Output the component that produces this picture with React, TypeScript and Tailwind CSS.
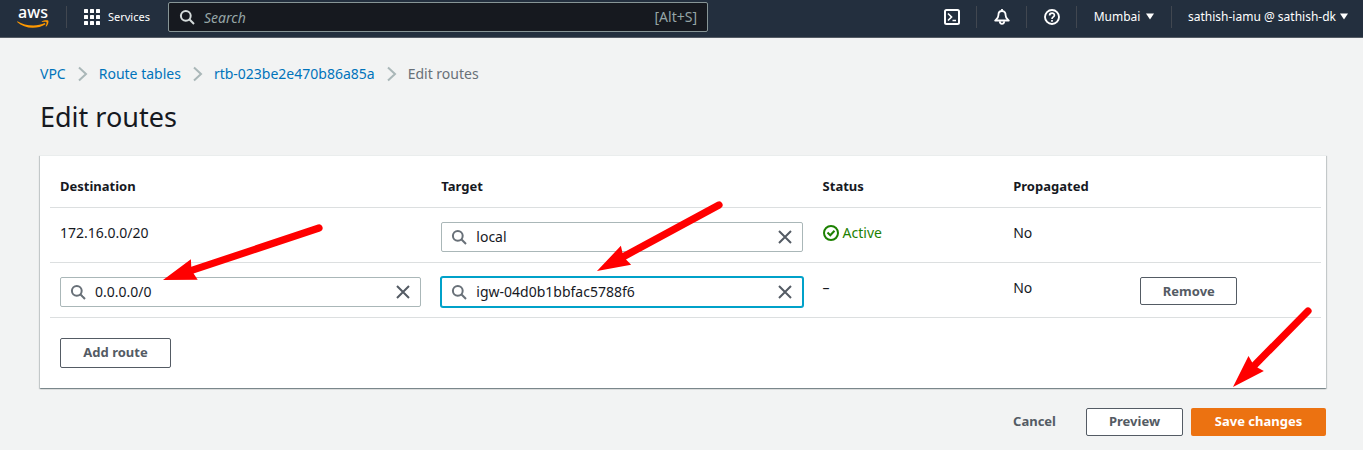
import React from "react";

function SearchIcon({ className }: { className: string }) {
  return (
    <svg viewBox="0 0 16 16" className={className} fill="none" stroke="currentColor" strokeWidth="2" aria-hidden="true">
      <circle cx="6.8" cy="6.8" r="4.9" />
      <path d="M10.3 10.3 15 15" />
    </svg>
  );
}

function Chevron() {
  return (
    <svg viewBox="0 0 10 16" className="h-4 w-[10px] text-[#aab7b8]" fill="none" stroke="currentColor" strokeWidth="2" aria-hidden="true">
      <path d="M1 1.5 8 8 1 14.5" />
    </svg>
  );
}

function Caret() {
  return (
    <svg viewBox="0 0 8 7" className="h-[7px] w-2" fill="currentColor" aria-hidden="true">
      <path d="M0 0.5H8L4 6.5Z" />
    </svg>
  );
}

function AwsLogo() {
  return (
    <a href="#home" aria-label="AWS home" className="flex w-[66px] shrink-0 flex-col items-center pt-[3px]">
      <span className="h-3 text-[16px] leading-[9px] font-medium text-white">aws</span>
      <svg viewBox="0 0 32 9" className="h-[9px] w-8" aria-hidden="true">
        <path d="M.4 1.2C7.6 6 20.500 6.800 27.800 3l.7 1.200C20.300 9.400 7.500 9 .1 2z" fill="#ff9900" />
        <path d="M24.800 1.600c1.900-1.500 5.400-1.700 6.400-1 .7 1.100-.2 4.300-1.900 5.800-.4.400-.8.200-.6-.3.500-1.200 1.200-3.300.8-3.900-.5-.6-2.700-.3-4.100-.2-.7.100-.9-.1-.6-.4z" fill="#ff9900" />
      </svg>
    </a>
  );
}

function TokenField({ label, value, focused = false }: { label: string; value: string; focused?: boolean }) {
  return (
    <div
      className={
        "flex h-[30px] items-center rounded-[2px] border bg-white px-[9px] " +
        (focused ? "border-[#00a1c9] ring-1 ring-[#00a1c9]" : "border-[#aab7b8]")
      }
    >
      <SearchIcon className="h-4 w-4 shrink-0 text-[#687078]" />
      <input
        aria-label={label}
        defaultValue={value}
        className="ml-[9px] h-6 min-w-0 flex-1 bg-transparent text-sm text-[#16191f] outline-none"
      />
      <button type="button" aria-label={"Clear " + label} className="flex h-4 w-4 items-center justify-center text-[#545b64]">
        <svg viewBox="0 0 16 16" className="h-4 w-4" fill="none" stroke="currentColor" strokeWidth="2" aria-hidden="true">
          <path d="m2 2 12 12M14 2 2 14" />
        </svg>
      </button>
    </div>
  );
}

function Divider() {
  return <span className="h-[22px] w-px shrink-0 bg-[#414750]" />;
}

function TopBar() {
  return (
    <header className="flex h-[38px] items-center border-b border-[#545b64] bg-[#232f3e] pb-[3px] text-[12px] text-white">
      <AwsLogo />
      <Divider />
      <button type="button" className="flex w-[101px] shrink-0 items-center gap-2 pl-[17px]">
        <svg viewBox="0 0 16 16" className="h-4 w-4 shrink-0" fill="currentColor" aria-hidden="true">
          {[0, 6, 12].map((y) => [0, 6, 12].map((x) => <rect key={x + "-" + y} x={x} y={y} width="4" height="4" rx="0.600" />))}
        </svg>
        <span className="text-[11px]">Services</span>
      </button>
      <div className="flex h-[30px] w-[540px] shrink-0 items-center rounded-[2px] border border-[#879596] bg-[#16191f] px-[10px]">
        <SearchIcon className="h-4 w-4 shrink-0 text-[#d5dbdb]" />
        <input
          aria-label="Search"
          placeholder="Search"
          className="ml-[9px] h-6 min-w-0 flex-1 bg-transparent text-sm text-white outline-none placeholder:text-[#95a5a6] placeholder:italic"
        />
        <span className="text-sm text-[#95a5a6]">[Alt+S]</span>
      </div>
      <nav aria-label="Account" className="ml-auto flex items-center">
        <button type="button" aria-label="CloudShell" className="flex w-[49px] justify-center">
          <svg viewBox="0 0 16 16" className="h-4 w-4" fill="none" stroke="currentColor" strokeWidth="2" aria-hidden="true">
            <rect x="1" y="1" width="14" height="14" rx="1.500" />
            <path d="M4 4.500 7.500 8 4 11.500M8.500 11.500H12" strokeWidth="1.700" />
          </svg>
        </button>
        <Divider />
        <button type="button" aria-label="Notifications" className="flex w-[49px] justify-center">
          <svg viewBox="0 0 16 16" className="h-4 w-4" fill="none" stroke="currentColor" strokeWidth="1.800" strokeLinejoin="round" aria-hidden="true">
            <path d="M8 0v2M8 2C5.300 2 4.400 4 4.400 6.200 4.400 9 2.800 9.700 1.200 11.500H14.800C13.200 9.700 11.600 9 11.600 6.200 11.600 4 10.700 2 8 2Z" />
            <path d="M5.800 12.300a2.200 2.500 0 0 0 4.400 0" />
          </svg>
        </button>
        <Divider />
        <button type="button" aria-label="Help" className="flex w-[49px] justify-center">
          <svg viewBox="0 0 16 16" className="h-4 w-4" fill="none" stroke="currentColor" strokeWidth="1.900" aria-hidden="true">
            <circle cx="8" cy="8" r="7" />
            <path d="M5.600 6.500C5.600 3.200 10.500 3.400 10.400 6.200 10.400 8 8 7.800 8 10M8 11v1.800" strokeWidth="1.700" />
          </svg>
        </button>
        <Divider />
        <button type="button" className="flex w-[94px] items-center justify-center gap-[6px]">
          Mumbai <Caret />
        </button>
        <Divider />
        <button type="button" className="flex items-center gap-1 pr-[15px] pl-4 whitespace-nowrap">
          sathish-iamu @ sathish-dk <Caret />
        </button>
      </nav>
    </header>
  );
}

const outline =
  "rounded-[2px] border border-[#545b64] bg-white text-[13px] font-bold text-[#545b64] whitespace-nowrap";

/* Arrow drawn from its round tail to its pointed head. */
function Arrow({ tail, head }: { tail: [number, number]; head: [number, number] }) {
  const dx = head[0] - tail[0];
  const dy = head[1] - tail[1];
  const length = Math.hypot(dx, dy);
  const angle = (Math.atan2(dy, dx) * 180) / Math.PI;
  return (
    <g transform={`translate(${tail[0]} ${tail[1]}) rotate(${angle})`} fill="#ff0000">
      <path d={`M0 -3.600A3.600 3.600 0 0 0 0 3.600L${length - 31} 3.600L${length - 33} 10.800L${length} 0L${length - 33} -10.800L${length - 31} -3.600Z`} />
    </g>
  );
}

export default function App() {
  const cell = "px-[10px] pt-[14px] pb-[10px] align-top";
  return (
    <div className="relative min-h-screen bg-[#f2f3f3] font-['Noto_Sans','Open_Sans',sans-serif] text-sm text-[#16191f]">
      <TopBar />
      <main className="pr-[37px] pb-[14px] pl-10">
        <nav aria-label="Breadcrumb" className="pt-[25px]">
          <ol className="flex h-[22px] items-center gap-[11px] text-[#0073bb]">
            <li className="flex items-center gap-3"><a href="#vpc">VPC</a><Chevron /></li>
            <li className="flex items-center gap-3"><a href="#tables">Route tables</a><Chevron /></li>
            <li className="flex items-center gap-3"><a href="#rtb">rtb-023be2e470b86a85a</a><Chevron /></li>
            <li className="text-[#687078]" aria-current="page">Edit routes</li>
          </ol>
        </nav>
        <h1 className="pt-[14px] text-[27px] leading-9">Edit routes</h1>

        <section className="mt-5 border-t border-[#eaeded] bg-white pb-5 shadow-[0_1px_1px_0_rgba(0,28,36,0.3),1px_1px_1px_0_rgba(0,28,36,0.15),-1px_1px_1px_0_rgba(0,28,36,0.15)]">
          <div className="pr-[5px] pl-[10px]">
            <table className="w-full table-fixed border-collapse text-left">
              <colgroup>
                <col className="w-[30%]" />
                <col className="w-[30%]" />
                <col className="w-[15%]" />
                <col className="w-[10%]" />
                <col className="w-[15%]" />
              </colgroup>
              <thead>
                <tr className="h-[51px] border-b border-[#dcdfe0] text-[13px]">
                  <th scope="col" className="px-[10px] pt-[10px] font-bold">Destination</th>
                  <th scope="col" className="px-[10px] pt-[10px] font-bold">Target</th>
                  <th scope="col" className="px-[10px] pt-[10px] font-bold">Status</th>
                  <th scope="col" className="px-[10px] pt-[10px] font-bold">Propagated</th>
                  <td />
                </tr>
              </thead>
              <tbody className="leading-[22px]">
                <tr className="h-[55px] border-b border-[#dcdfe0]">
                  <td className={cell}>172.16.0.0/20</td>
                  <td className={cell}><TokenField label="Target of route 1" value="local" /></td>
                  <td className={cell}>
                    <span className="flex items-center gap-1 text-[#1d8102]">
                      <svg viewBox="0 0 16 16" className="h-4 w-4" fill="none" stroke="currentColor" strokeWidth="2" aria-hidden="true">
                        <circle cx="8" cy="8" r="7" />
                        <path d="M4.500 7.500 7.300 10.300 11.500 5.800" />
                      </svg>
                      Active
                    </span>
                  </td>
                  <td className={cell}>No</td>
                  <td className={cell} />
                </tr>
                <tr className="h-[55px] border-b border-[#dcdfe0]">
                  <td className={cell}><TokenField label="Destination of route 2" value="0.0.0.0/0" /></td>
                  <td className={cell}><TokenField label="Target of route 2" value="igw-04d0b1bbfac5788f6" focused /></td>
                  <td className={cell}>–</td>
                  <td className={cell}>No</td>
                  <td className={cell}>
                    <button type="button" className={outline + " block h-7 w-[97px]"}>Remove</button>
                  </td>
                </tr>
              </tbody>
            </table>
          </div>
          <button type="button" className={outline + " mt-5 ml-5 block h-[30px] w-[111px]"}>Add route</button>
        </section>

        <div className="mt-5 flex justify-end gap-2">
          <button type="button" className="h-7 px-[22px] text-[13px] font-bold text-[#545b64]">Cancel</button>
          <button type="button" className={outline + " h-7 w-[97px]"}>Preview</button>
          <button type="button" className="h-7 w-[135px] rounded-[2px] bg-[#ec7211] text-[13px] font-bold text-white">Save changes</button>
        </div>
      </main>

      <svg viewBox="0 0 1363 450" className="pointer-events-none absolute top-0 left-0 h-[450px] w-[1363px] max-w-full" aria-hidden="true">
        <Arrow tail={[319, 228]} head={[163, 280]} />
        <Arrow tail={[719, 205]} head={[597, 271]} />
        <Arrow tail={[1308, 311]} head={[1233, 387]} />
      </svg>
    </div>
  );
}
